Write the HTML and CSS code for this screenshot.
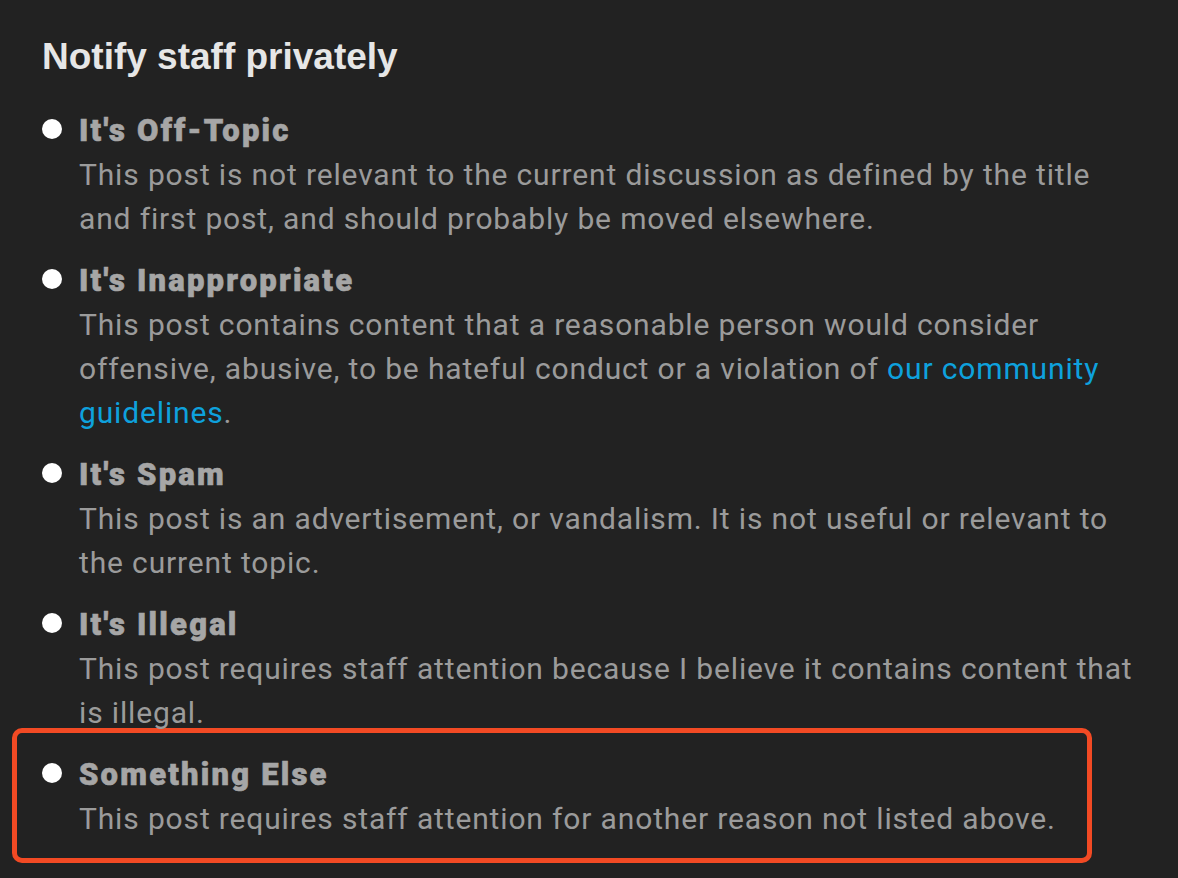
FILE: index.html
```html
<!DOCTYPE html>
<html lang="en">
<head>
  <meta charset="UTF-8" />
  <meta name="viewport" content="width=device-width, initial-scale=1.0" />
  <title>Flag post</title>
  <link rel="stylesheet" href="styles.css">
</head>
<body>
  <div class="flag-panel">
    <h2>Notify staff privately</h2>

    <div class="option">
      <span class="radio"></span>
      <div class="title">It's Off-Topic</div>
      <div class="desc">This post is not relevant to the current discussion as defined by the title and first post, and should probably be moved elsewhere.</div>
    </div>

    <div class="option">
      <span class="radio"></span>
      <div class="title">It's Inappropriate</div>
      <div class="desc">This post contains content that a reasonable person would consider offensive, abusive, to be hateful conduct or a violation of <a href="#">our community guidelines</a>.</div>
    </div>

    <div class="option">
      <span class="radio"></span>
      <div class="title">It's Spam</div>
      <div class="desc">This post is an advertisement, or vandalism. It is not useful or relevant to the current topic.</div>
    </div>

    <div class="option">
      <span class="radio"></span>
      <div class="title">It's Illegal</div>
      <div class="desc">This post requires staff attention because I believe it contains content that is illegal.</div>
    </div>

    <div class="option highlighted">
      <span class="radio"></span>
      <div class="title">Something Else</div>
      <div class="desc">This post requires staff attention for another reason not listed above.</div>
    </div>
  </div>
</body>
</html>
```

FILE: styles.css
```css
body { margin: 0; background: #222222; font-family: Roboto, "Liberation Sans", sans-serif; }
.flag-panel { padding: 30px 0 0 42px; width: 1096px; }
h2 { margin: 0 0 25px 0; font-family: "Liberation Sans", Arial, sans-serif; font-size: 37px; line-height: 54px; font-weight: bold; color: #e6e6e6; }
.option { display: grid; grid-template-columns: 37px 1fr; margin-bottom: 18px; }
.radio { grid-row: 1; grid-column: 1; width: 20px; height: 20px; border-radius: 50%; background: #fff; align-self: center; margin-top: -4px; }
.title { grid-row: 1; grid-column: 2; font-size: 31px; line-height: 44px; font-weight: 900; letter-spacing: 2.2px; color: #a6a6a6; -webkit-text-stroke: 0.6px #a6a6a6; }
.desc { grid-row: 2; grid-column: 2; font-size: 30px; line-height: 44px; letter-spacing: 0.85px; color: #9b9b9b; }
.desc a { color: #0ea1dd; text-decoration: none; }
.option.highlighted { margin: -25px 0 0 -30px; padding: 20px 0 17px 25px; width: 1045px; border: 5px solid #f24a24; border-radius: 10px; }
```
